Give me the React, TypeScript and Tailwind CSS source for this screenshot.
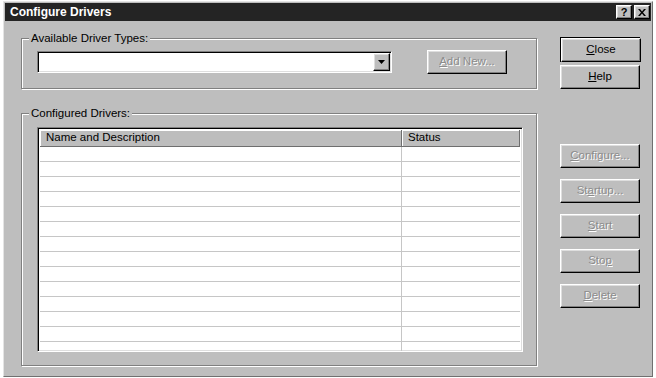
import React from "react";

// ─── Helpers ────────────────────────────────────────────────────────────────

const FONT = "font-['Liberation_Sans',Arial,sans-serif]";

const RAISED =
  "border border-t-white border-l-white border-r-black border-b-black shadow-[inset_-1px_-1px_0_#808080,inset_1px_1px_0_#dedede]";

const SUNKEN =
  "border border-t-[#808080] border-l-[#808080] border-r-white border-b-white shadow-[inset_1px_1px_0_#000,inset_-1px_-1px_0_#dedede]";

function Label({ text, u, disabled }: { text: string; u?: number; disabled?: boolean }) {
  const chars =
    u === undefined ? (
      text
    ) : (
      <>
        {text.slice(0, u)}
        <u className="underline underline-offset-[1px]">{text[u]}</u>
        {text.slice(u + 1)}
      </>
    );
  return (
    <span
      className={
        disabled
          ? "text-[#8c8c8c] [text-shadow:1px_1px_0_#ffffff]"
          : "text-black"
      }
    >
      {chars}
    </span>
  );
}

// ─── Sub-components ─────────────────────────────────────────────────────────

function Button({
  text,
  u,
  disabled,
  className = "",
}: {
  text: string;
  u?: number;
  disabled?: boolean;
  className?: string;
}) {
  return (
    <div
      className={`flex h-[24px] w-[80px] items-center justify-center bg-[#bebebe] text-[11.5px] leading-none ${RAISED} ${className}`}
    >
      <Label text={text} u={u} disabled={disabled} />
    </div>
  );
}

function GroupBox({
  title,
  className = "",
  children,
}: {
  title: string;
  className?: string;
  children: React.ReactNode;
}) {
  return (
    <div
      className={`relative border border-[#808080] shadow-[inset_1px_1px_0_#ffffff,1px_1px_0_#ffffff] ${className}`}
    >
      <span className="absolute left-[7px] top-[-8px] bg-[#bebebe] px-[2px] text-[11.5px] leading-[14px] text-black">
        {title}
      </span>
      {children}
    </div>
  );
}

function TitleButton({ children }: { children: React.ReactNode }) {
  return (
    <div
      className={`flex h-[14px] w-[16px] items-center justify-center bg-[#bebebe] ${RAISED}`}
    >
      {children}
    </div>
  );
}

// ─── Main Component ─────────────────────────────────────────────────────────

const ROWS = Array.from({ length: 14 });

export default function App() {
  return (
    <div className={`h-[378px] w-[656px] bg-white pl-[3px] pt-[1px] ${FONT}`}>
      <div className="flex h-[376px] w-[650px] flex-col border border-l-[#e4e4e4] border-t-[#e4e4e4] border-r-[#707070] border-b-[#707070] bg-[#bebebe]">
        {/* Title bar */}
        <div className="mx-[1px] mt-[1px] flex h-[18px] items-center bg-[#242424] pl-[5px] pr-[1px]">
          <span className="text-[12px] font-bold leading-none text-white">
            Configure Drivers
          </span>
          <div className="ml-auto flex gap-[2px]">
            <TitleButton>
              <span className="text-[11px] font-bold leading-none text-black">?</span>
            </TitleButton>
            <TitleButton>
              <svg width="8" height="7" viewBox="0 0 8 7" aria-hidden="true">
                <path d="M0 0h2l2 2.5L6 0h2L5 3.5 8 7H6L4 4.5 2 7H0l3-3.5z" fill="#000" />
              </svg>
            </TitleButton>
          </div>
        </div>

        {/* Body */}
        <div className="flex gap-[23px] pl-[17px]">
          <div className="w-[516px] pt-[17px]">
            <GroupBox title="Available Driver Types:" className="h-[51px]">
              <div className="flex items-center pl-[15px] pt-[11px]">
                <div className={`flex h-[22px] w-[355px] justify-end bg-white p-[1px] ${SUNKEN}`}>
                  <div className={`flex h-full w-[17px] items-center justify-center bg-[#bebebe] ${RAISED}`}>
                    <svg width="7" height="4" viewBox="0 0 7 4" aria-hidden="true">
                      <path d="M0 0h7L3.5 4z" fill="#000" />
                    </svg>
                  </div>
                </div>
                <Button text="Add New..." u={0} disabled className="ml-[35px]" />
              </div>
            </GroupBox>

            <GroupBox title="Configured Drivers:" className="mt-[24px] h-[253px]">
              <div className="pl-[15px] pt-[13px]">
                <div className={`h-[225px] w-[486px] overflow-hidden bg-white p-[2px] ${SUNKEN}`}>
                  {/* Header */}
                  <div className="flex h-[17px] text-[11.5px] leading-none text-black">
                    <div className="flex w-[362px] items-center border-b border-r border-[#6e6e6e] bg-[#bdbdbd] pl-[6px] shadow-[inset_1px_1px_0_#ffffff]">
                      Name and Description
                    </div>
                    <div className="flex flex-1 items-center border-b border-r border-[#6e6e6e] bg-[#bdbdbd] pl-[6px] shadow-[inset_1px_1px_0_#ffffff]">
                      Status
                    </div>
                  </div>
                  {/* Empty rows */}
                  {ROWS.map((_, i) => (
                    <div key={i} className="flex h-[15px] border-b border-[#c6c6c6]">
                      <div className="w-[362px] border-r border-[#c6c6c6]" />
                      <div className="flex-1" />
                    </div>
                  ))}
                </div>
              </div>
            </GroupBox>
          </div>

          {/* Right-side buttons */}
          <div className="flex w-[80px] flex-col pt-[16px]">
            <div className="h-[25px] w-[80px] border border-black">
              <Button text="Close" u={0} className="h-[23px] w-[78px]" />
            </div>
            <Button text="Help" u={0} className="mt-[3px]" />
            <Button text="Configure..." u={0} disabled className="mt-[55px]" />
            <Button text="Startup..." u={2} disabled className="mt-[11px]" />
            <Button text="Start" u={0} disabled className="mt-[11px]" />
            <Button text="Stop" u={3} disabled className="mt-[11px]" />
            <Button text="Delete" u={0} disabled className="mt-[11px]" />
          </div>
        </div>
      </div>
    </div>
  );
}
